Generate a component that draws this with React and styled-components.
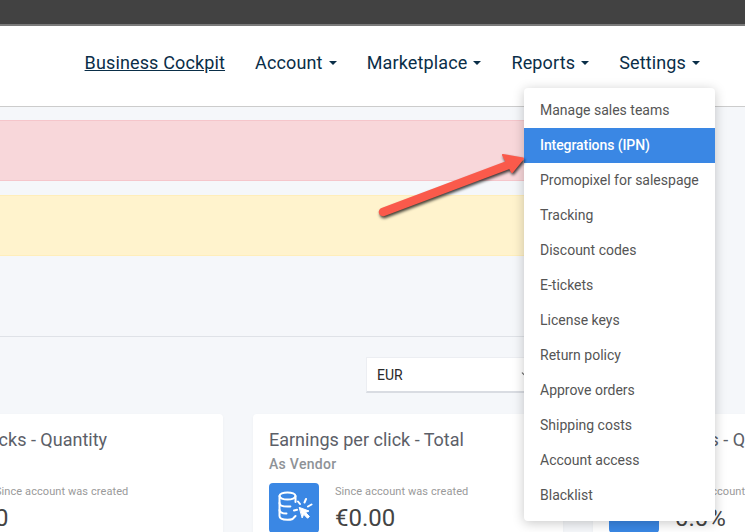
import React from 'react'
import styled, { createGlobalStyle } from 'styled-components'
import { ChevronDown } from 'lucide-react'

const Global = createGlobalStyle`
  html, body { margin: 0; padding: 0; }
  body { background: #f5f7fa; font-family: Roboto, "Liberation Sans", sans-serif; }
`

const navItems = [
  { label: 'Business Cockpit', active: true },
  { label: 'Account' },
  { label: 'Marketplace' },
  { label: 'Reports' },
  { label: 'Settings' },
]

const menuItems = [
  'Manage sales teams',
  'Integrations (IPN)',
  'Promopixel for salespage',
  'Tracking',
  'Discount codes',
  'E-tickets',
  'License keys',
  'Return policy',
  'Approve orders',
  'Shipping costs',
  'Account access',
  'Blacklist',
]

const cards = [
  { title: 'Direct clicks - Quantity', sub: 'As Vendor', value: '0' },
  { title: 'Earnings per click - Total', sub: 'As Vendor', value: '€0.00' },
  { title: 'Subscriptions - Quantity', sub: 'As Vendor', value: '0.0%' },
]

function ClickIcon() {
  return (
    <svg width="50" height="50" viewBox="0 0 50 50" fill="none" stroke="#fff" strokeWidth="2" strokeLinecap="round" strokeLinejoin="round">
      <ellipse cx="18.500" cy="13" rx="8" ry="3.600" />
      <path d="M10.500 13v20c0 2.300 3.500 3.800 8 3.800 2 0 3.800-.3 5.200-.8" />
      <path d="M26.500 13v6" />
      <path d="M10.500 20c0 2.300 3.500 3.600 8 3.600 1 0 2-.1 2.900-.2" />
      <path d="M10.500 27c0 2.200 3 3.500 7 3.600" />
      <path d="M25 27.500l3-.7M26.500 33l-2 2M29 18.500l2 2.500M37 16l-1.500 3.500M42.500 21.500l-3.500 2" />
      <path d="M30.500 24.500l9.500 3.500-3.400 1.500 3.800 4-1.800 1.800-3.900-4-1.400 3.300z" fill="#fff" strokeWidth="1" />
    </svg>
  )
}

function App() {
  return (
    <Page>
      <Global />
      <TopBar />
      <Navbar>
        {navItems.map((item) => (
          <NavLink key={item.label} $active={item.active}>
            {item.label}
            {!item.active && <Caret />}
          </NavLink>
        ))}
      </Navbar>
      <Main>
        <Alert $kind="danger" />
        <Alert $kind="warning" />
        <Divider />
        <Toolbar>
          <CurrencySelect>
            EUR
            <ChevronDown size={13} color="#666" />
          </CurrencySelect>
        </Toolbar>
      </Main>
      <CardRow>
        {cards.map((card) => (
          <Card key={card.title}>
            <CardTitle>{card.title}</CardTitle>
            <CardSub>{card.sub}</CardSub>
            <CardBody>
              <IconBox><ClickIcon /></IconBox>
              <div>
                <Since>Since account was created</Since>
                <Value>{card.value}</Value>
              </div>
            </CardBody>
          </Card>
        ))}
      </CardRow>
      <DropMenu>
        {menuItems.map((item) => (
          <MenuItem key={item} $selected={item === 'Integrations (IPN)'}>{item}</MenuItem>
        ))}
      </DropMenu>
      <Arrow width="170" height="80" viewBox="0 0 170 80">
        <path d="M13 67L138 20" stroke="#fa5a4b" strokeWidth="8.500" strokeLinecap="round" fill="none" />
        <path d="M133 10L153 13.500L142 27z" fill="#fa5a4b" stroke="#fa5a4b" strokeWidth="2" strokeLinejoin="round" />
      </Arrow>
    </Page>
  )
}

export default App

const Page = styled.div`
  position: relative;
  width: 745px;
  height: 532px;
  overflow: hidden;
  background: #f5f7fa;
`

const TopBar = styled.div`
  height: 24px;
  background: #424242;
  border-bottom: 2px solid #7a7a7a;
`

const Navbar = styled.nav`
  height: 72px;
  background: #fff;
  border-bottom: 1px solid #cccccc;
  display: flex;
  align-items: center;
  justify-content: flex-end;
  gap: 30px;
  padding-right: 45px;
  padding-bottom: 8px;
`

const NavLink = styled.a`
  font-size: 18px;
  color: #0a2e48;
  letter-spacing: 0.14px;
  text-decoration: ${(p) => (p.$active ? 'underline' : 'none')};
  display: flex;
  align-items: center;
`

const Caret = styled.span`
  display: inline-block;
  margin-left: 6px;
  margin-top: 1px;
  border-top: 4px solid #0a2e48;
  border-left: 4px solid transparent;
  border-right: 4px solid transparent;
`

const Main = styled.main`
  width: 600px;
  padding-top: 13px;
`

const Alert = styled.div`
  height: 59px;
  margin-bottom: 14px;
  border: 1px solid ${(p) => (p.$kind === 'danger' ? '#f5c6cb' : '#ffeeba')};
  border-left: 0;
  background: ${(p) => (p.$kind === 'danger' ? '#f8d7da' : '#fff3cd')};
`

const Divider = styled.hr`
  margin: 80px 0 0;
  border: 0;
  border-top: 1px solid #dfe2e7;
`

const Toolbar = styled.div`
  display: flex;
  justify-content: flex-end;
  padding: 20px 60px 0 0;
`

const CurrencySelect = styled.div`
  width: 174px;
  height: 36px;
  padding: 0 7px 0 10px;
  box-sizing: border-box;
  display: flex;
  align-items: center;
  justify-content: space-between;
  background: #fff;
  border: 1px solid #eceef2;
  border-bottom: 2px solid #d9dce2;
  font-size: 14px;
  color: #2a2a2a;
`

const CardRow = styled.div`
  display: grid;
  grid-template-columns: repeat(3, 310px);
  gap: 30px;
  margin: 21px 0 0 -87px;
`

const Card = styled.section`
  height: 200px;
  padding: 14px 16px;
  box-sizing: border-box;
  background: #fff;
  border-radius: 4px;
  box-shadow: 0 1px 3px rgba(0, 0, 0, 0.04);
`

const CardTitle = styled.h3`
  margin: 0;
  font-size: 18px;
  line-height: 24px;
  font-weight: 400;
  color: #5c6068;
`

const CardSub = styled.div`
  margin-top: 4px;
  font-size: 14px;
  line-height: 16px;
  font-weight: 500;
  letter-spacing: 0.3px;
  color: #8e9297;
`

const CardBody = styled.div`
  display: flex;
  gap: 16px;
  margin-top: 11px;
`

const IconBox = styled.div`
  width: 50px;
  height: 50px;
  border-radius: 4px;
  background: #3a87e4;
  flex-shrink: 0;
`

const Since = styled.div`
  margin-top: 1px;
  font-size: 11px;
  line-height: 16px;
  letter-spacing: 0.08px;
  color: #9a9a9a;
`

const Value = styled.div`
  margin-top: 3px;
  font-size: 24px;
  line-height: 30px;
  color: #444;
`

const DropMenu = styled.div`
  position: absolute;
  left: 524px;
  top: 88px;
  width: 191px;
  padding: 5px 0 8px;
  box-sizing: border-box;
  background: #fff;
  border-radius: 4px;
  box-shadow: 0 2px 12px rgba(0, 0, 0, 0.22);
`

const MenuItem = styled.div`
  height: 35px;
  line-height: 35px;
  padding-left: 16px;
  font-size: 14px;
  letter-spacing: ${(p) => (p.$selected ? '-0.08px' : '0')};
  font-weight: ${(p) => (p.$selected ? 500 : 400)};
  color: ${(p) => (p.$selected ? '#fff' : '#555')};
  background: ${(p) => (p.$selected ? '#3a87e4' : 'transparent')};
`

const Arrow = styled.svg`
  position: absolute;
  left: 370px;
  top: 145px;
  filter: drop-shadow(1px 2px 1.5px rgba(0, 0, 0, 0.75));
`
